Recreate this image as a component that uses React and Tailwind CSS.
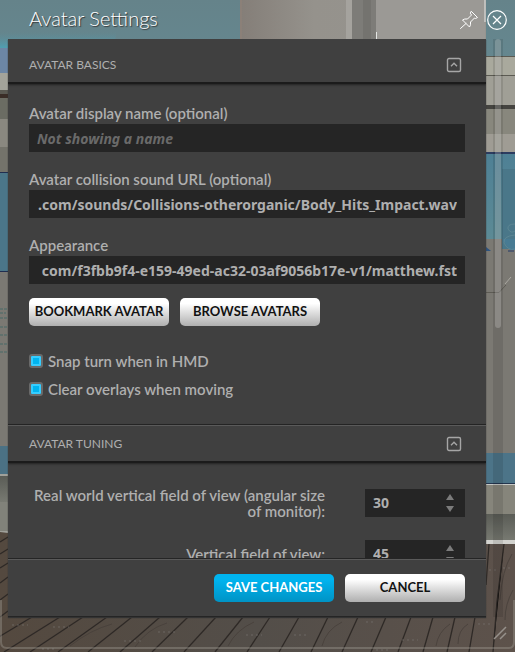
import React, { useEffect, useId, useRef } from "react";

const SEAMS = [
  [-26, 32], [4, 60], [30, 83], [58, 107], [88, 132], [120, 160], [152, 188], [184, 216], [215, 243], [247, 270],
  [279, 299], [311, 328], [342, 358], [371, 386], [398, 411], [423, 433], [447, 455],
];

function Scene() {
  return (
    <svg className="absolute inset-0 h-full w-full" viewBox="0 0 515 652" preserveAspectRatio="none" aria-hidden="true">
      <defs>
        <linearGradient id="sky" x1="0" y1="0" x2="0" y2="1">
          <stop offset="0" stopColor="#65838a" />
          <stop offset="1" stopColor="#65878f" />
        </linearGradient>
        <linearGradient id="glow" x1="0" y1="0" x2="0" y2="1">
          <stop offset="0.4" stopColor="#5a8f9c" stopOpacity="0" />
          <stop offset="1" stopColor="#4f9fb2" />
        </linearGradient>
        <linearGradient id="wall" x1="0" y1="0" x2="1" y2="0">
          <stop offset="0" stopColor="#847e78" />
          <stop offset="0.3" stopColor="#95928c" />
          <stop offset="1" stopColor="#969590" />
        </linearGradient>
        <linearGradient id="teal" x1="0" y1="0" x2="0" y2="1">
          <stop offset="0" stopColor="#4e8095" />
          <stop offset="1" stopColor="#5c8a95" />
        </linearGradient>
        <linearGradient id="ledge" x1="0" y1="0" x2="0" y2="1">
          <stop offset="0" stopColor="#5a5c56" />
          <stop offset="1" stopColor="#787a72" />
        </linearGradient>
        <linearGradient id="floor" x1="0" y1="0" x2="1" y2="0">
          <stop offset="0" stopColor="#54493f" />
          <stop offset="0.5" stopColor="#534e49" />
          <stop offset="1" stopColor="#5d524b" />
        </linearGradient>
      </defs>
      <rect width="515" height="652" fill="#7b7973" />
      <rect width="515" height="57" fill="url(#sky)" />
      <path d="M0 22Q60 34 118 26L115 40V48H0Z" fill="url(#glow)" />
      <rect x="240" width="246" height="40" fill="url(#wall)" />
      <rect x="240" width="2" height="40" fill="#8b8078" />
      <rect x="346" width="6" height="40" fill="#a5a39e" />
      <rect x="352" width="24" height="40" fill="#7d7c78" />
      <rect x="363" width="8" height="40" fill="#74736f" />
      <rect x="376" width="109" height="40" fill="#9b9995" />
      <path d="M376.500 32V40M485 0V22" stroke="#e4e6e4" />
      <rect y="48" width="8" height="25" fill="#6c86a5" />
      <rect y="73" width="8" height="17" fill="#a3a39a" />
      <rect y="90" width="8" height="4" fill="#5a5952" />
      <rect y="94" width="8" height="4" fill="#3a2d27" />
      <rect y="98" width="8" height="21" fill="#6b6c63" />
      <rect y="119" width="8" height="28" fill="#8a8880" />
      <rect y="147" width="8" height="25" fill="#74736b" />
      <rect y="172" width="8" height="99" fill="#4b7689" />
      <path d="M0 172.500H8M0 271.500H8" stroke="#202e50" />
      <path d="M0 309h8M0 313h6M0 318h8M0 327h8M0 335h8M0 344h7M0 352h8" stroke="#576d6b" strokeOpacity=".7" strokeWidth="2" strokeDasharray="3 1" />
      <rect y="446" width="8" height="28" fill="#4b7184" />
      <rect y="474" width="8" height="2" fill="#a0a09a" />
      <rect y="476" width="8" height="26" fill="url(#ledge)" />
      <rect y="502" width="8" height="30" fill="#81827a" />
      <rect y="531" width="8" height="2" fill="#9fa09a" />
      <rect x="486" y="56" width="29" height="20" fill="#a9a99d" />
      <path d="M486 56.500h29M486 75.500h29" stroke="#5b5a52" />
      <rect x="486" y="76" width="29" height="29" fill="#a09f96" />
      <rect x="486" y="105" width="29" height="4" fill="#454440" />
      <rect x="486" y="109" width="29" height="25" fill="#88877d" />
      <rect x="486" y="134" width="29" height="18" fill="#9f9c94" />
      <rect x="486" y="152" width="29" height="87" fill="url(#teal)" />
      <rect x="502" y="169" width="13" height="80" fill="#4a7789" />
      <path d="M486 153h29" stroke="#2c3c60" strokeWidth="2" />
      <path d="M502 239L510 250H515V239Z" fill="#487b93" />
      <path d="M486 247L491 251H486Z" fill="#2d5380" />
      <path d="M508 251h6" stroke="#253b68" />
      <path d="M515 224q-8 0-7 5q3 5 7 2M515 235q-12 1-11 8q4 8 11 6" fill="none" stroke="#6d939d" strokeOpacity=".5" />
      <path d="M486 292.500H499L506 285" fill="none" stroke="#5d5b54" />
      <path d="M505 284L511 277" stroke="#aaa9a2" />
      <rect x="486" y="453" width="29" height="30" fill="#4c7488" />
      <path d="M486 483.500h29" stroke="#24364e" />
      <path d="M486 484.500h29" stroke="#c5c7c4" />
      <rect x="486" y="485" width="29" height="29" fill="#86857b" />
      <rect x="486" y="514" width="29" height="27" fill="url(#ledge)" />
      <rect x="486" y="540" width="29" height="4" fill="#d3d3cf" />
      <path d="M0 532L8 533V544H515V652H0Z" fill="url(#floor)" />
      <g stroke="#2e2926" strokeWidth="1.300">
        {SEAMS.map(([bottom, top]) => (
          <path key={bottom} d={`M${bottom} 652L${top} 617`} />
        ))}
        <path d="M469 652L475 617M493 652L497 602L504 544M486 585L489 544" />
        <path d="M0 542L8 537M0 554L8 549M0 568L8 563M0 583L8 577M0 600L8 594M0 617L8 611" />
      </g>
      <g stroke="#463f3a" strokeWidth=".8" fill="none">
        <path d="M70 646q20-16 42-22M135 647q12-18 32-24M228 646q8-16 26-24M322 646q4-16 20-24M436 646q2-14 14-22M458 644q0-14 10-20M500 600q2-30 12-46M505 620q0-16 8-30" />
      </g>
      <g stroke="#7c7a76" strokeDasharray="2 3" strokeOpacity=".6">
        <path d="M12 625h16M53 627h16M124 641h18M158 632h18M246 635h16M294 635h14M366 622h10M402 640h16M478 624h12M376 650h14M42 649h14M489 570h8M503 568h10" />
      </g>
      <path d="M1 600V642Q1 648 7 648H509Q514 648 514 642V600" fill="none" stroke="#aaa59f" strokeOpacity=".35" strokeWidth="2" />
    </svg>
  );
}

function PinIcon() {
  return (
    <svg className="h-5 w-5" viewBox="0 0 20 20" fill="none" stroke="currentColor" strokeLinejoin="round" strokeLinecap="round" aria-hidden="true">
      <path d="M12.500 1.500L18.500 7.500L16.500 8.500L15.500 8L11.500 12Q12 15 10.500 17L3.500 10Q5.500 8.500 8.500 9L12.500 5L11.500 3.500ZM7 13.500L1.500 18.500" />
    </svg>
  );
}

function CloseIcon() {
  return (
    <svg className="h-5 w-5" viewBox="0 0 20 20" fill="none" stroke="currentColor" strokeWidth="1.200" aria-hidden="true">
      <circle cx="10" cy="10" r="9.300" />
      <path d="M6 6L14 14M14 6L6 14" />
    </svg>
  );
}

function SectionHeader({ children, divided }) {
  return (
    <h2 className={divided ? "border-t border-[#252525]" : ""}>
      <button
        type="button"
        aria-expanded="true"
        className={
          "flex w-full items-center justify-between border-b-2 border-[#1b1b1b] pr-6 pl-[21px] text-left text-xs text-[#afafaf] shadow-[0_1px_2px_#222] " +
          (divided ? "h-[38px] border-t border-t-[#5a5a5a]" : "h-[45px] pt-2")
        }
      >
        {children}
        <svg className="h-4 w-4" viewBox="0 0 16 16" fill="none" stroke="#a6a6a6" aria-hidden="true">
          <rect x="1.500" y="1.500" width="13" height="13" rx="1.500" strokeWidth="1.400" />
          <path d="M5 9.300L8 6.300L11 9.300" strokeWidth="1.400" />
        </svg>
      </button>
    </h2>
  );
}

function Field({ label, value, placeholder }) {
  const id = useId();
  const input = useRef(null);

  // Long addresses are shown from their end, where the file name is.
  useEffect(() => {
    input.current.scrollLeft = input.current.scrollWidth;
  }, []);

  return (
    <div>
      <label htmlFor={id} className="block text-[15px] leading-[22px] font-semibold text-[#afafaf]">{label}</label>
      <input
        ref={input}
        id={id}
        type="text"
        defaultValue={value}
        placeholder={placeholder}
        className="block h-7 w-full bg-[#252525] px-2 text-right font-['Noto_Sans',sans-serif] text-sm font-bold text-[#afafaf] outline-none placeholder:text-left placeholder:text-[#6a6a6a] placeholder:italic placeholder:opacity-100"
      />
    </div>
  );
}

function CheckRow({ children }) {
  return (
    <label className="flex h-7 items-center gap-[5px] text-[15px] font-semibold text-[#afafaf]">
      <input
        type="checkbox"
        defaultChecked
        className="h-3.5 w-3.5 appearance-none rounded-[3px] border-2 border-[#6a6a6a] bg-[#575757] checked:bg-[#00b4ef] checked:shadow-[inset_0_0_0_2px_#36cdff]"
      />
      {children}
    </label>
  );
}

function NumberRow({ label, value }) {
  const id = useId();
  return (
    <div className="flex items-center justify-end gap-10">
      <label htmlFor={id} className="flex-1 text-right text-[15px] leading-4 font-semibold text-[#afafaf]">{label}</label>
      <div className="flex h-7 w-[100px] shrink-0 bg-[#252525]">
        <input
          id={id}
          type="text"
          inputMode="numeric"
          defaultValue={value}
          className="w-full min-w-0 flex-1 pl-2 font-['Noto_Sans',sans-serif] text-sm font-bold text-[#afafaf] outline-none"
        />
        <div className="flex w-[30px] flex-col items-center justify-center gap-1">
          <button type="button" aria-label={`Increase ${label}`}>
            <svg className="block h-2 w-2" viewBox="0 0 8 8" fill="#7b7b7b"><path d="M0 7L4 1L8 7Z" /></svg>
          </button>
          <button type="button" aria-label={`Decrease ${label}`}>
            <svg className="block h-2 w-2" viewBox="0 0 8 8" fill="#7b7b7b"><path d="M0 1L4 7L8 1Z" /></svg>
          </button>
        </div>
      </div>
    </div>
  );
}

function Button({ children, primary, wide }) {
  return (
    <button
      type="button"
      className={
        "h-7 rounded-[5px] bg-linear-to-b text-[13px] font-bold whitespace-nowrap " +
        (wide ? "w-[140px] " : "w-[120px] ") +
        (primary ? "from-[#00b4ef] from-20% to-[#0093c5] text-white" : "from-white from-20% to-[#afafaf] text-[#121212]")
      }
    >
      {children}
    </button>
  );
}

export default function App() {
  return (
    <div className="relative flex h-screen flex-col overflow-hidden pb-[35px] font-[Lato,sans-serif]">
      <Scene />
      <header className="relative flex h-[39px] shrink-0 items-center justify-between pr-2 pl-[29px] text-white">
        <h1 className="pb-1 text-xl leading-7 font-light [text-shadow:1px_1px_1px_#333]">Avatar Settings</h1>
        <div className="flex items-center gap-2">
          <button type="button" aria-label="Pin"><PinIcon /></button>
          <button type="button" aria-label="Close"><CloseIcon /></button>
        </div>
      </header>

      <div className="relative flex min-h-0 flex-1 pl-2">
        <main className="flex min-w-0 flex-1 flex-col border-b border-[#252525] bg-[#404040] shadow-[0_1px_1px_#333]">
          <div className="min-h-0 flex-1 overflow-hidden">
            <SectionHeader>AVATAR BASICS</SectionHeader>
            <div className="px-[21px] pt-[18px] pb-[21px]">
              <div className="flex flex-col gap-4">
                <Field label="Avatar display name (optional)" placeholder="Not showing a name" />
                <Field label="Avatar collision sound URL (optional)" value=".com/sounds/Collisions-otherorganic/Body_Hits_Impact.wav" />
                <Field label="Appearance" value="com/f3fbb9f4-e159-49ed-ac32-03af9056b17e-v1/matthew.fst" />
              </div>
              <div className="mt-3.5 mb-[21px] flex gap-[11px]">
                <Button wide>BOOKMARK AVATAR</Button>
                <Button wide>BROWSE AVATARS</Button>
              </div>
              <CheckRow>Snap turn when in HMD</CheckRow>
              <CheckRow>Clear overlays when moving</CheckRow>
            </div>
            <SectionHeader divided>AVATAR TUNING</SectionHeader>
            <div className="flex flex-col gap-[21px] px-[21px] pt-6">
              <NumberRow label="Real world vertical field of view (angular size of monitor):" value="30" />
              <NumberRow label="Vertical field of view:" value="45" />
            </div>
          </div>
          <footer className="flex h-[58px] shrink-0 justify-end gap-[11px] border-t border-[#252525] bg-[#404040] pt-[15px] pr-[21px] shadow-[inset_0_1px_0_#5a5a5a]">
            <Button primary>SAVE CHANGES</Button>
            <Button>CANCEL</Button>
          </footer>
        </main>
        <div className="flex w-[29px] shrink-0 pl-[7px]">
          <div className="h-full w-2.5 bg-black/10 px-0.5">
            <div className="h-1/2 w-1.5 rounded-full bg-white/20" />
          </div>
        </div>
      </div>
      <svg className="absolute right-2 bottom-3 h-3.5 w-3.5" viewBox="0 0 14 14" stroke="#96918b" strokeWidth="1.500" aria-hidden="true">
        <path d="M1 13L13 1M7 13L13 7" />
      </svg>
    </div>
  );
}
